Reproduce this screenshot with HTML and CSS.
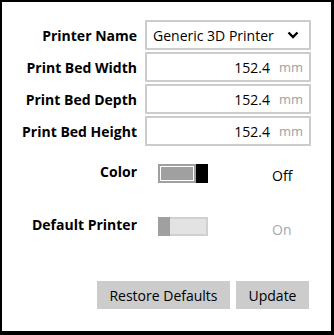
FILE: index.html
```html
<!DOCTYPE html>
<html>
<head>
<meta charset="utf-8">
<link rel="stylesheet" href="styles.css">
</head>
<body>
<div class="frame">
  <div class="fields">
    <div class="label">Printer Name</div>
    <div class="box select"><span>Generic 3D Printer</span>
      <svg class="chev" width="12" height="8" viewBox="0 0 12 8"><path d="M1.5 1.5 L6 6 L10.5 1.5" fill="none" stroke="#000" stroke-width="2.4"/></svg>
    </div>
    <div class="label">Print Bed Width</div>
    <div class="box num"><span class="val">152.4</span><span class="unit">mm</span></div>
    <div class="label">Print Bed Depth</div>
    <div class="box num"><span class="val">152.4</span><span class="unit">mm</span></div>
    <div class="label">Print Bed Height</div>
    <div class="box num"><span class="val">152.4</span><span class="unit">mm</span></div>
  </div>
  <div class="toggles">
    <div class="trow first">
      <div class="label">Color</div>
      <div class="tctl">
        <div class="toggle off"><div class="track"></div><div class="thumb"></div></div>
        <span class="state">Off</span>
      </div>
    </div>
    <div class="trow second">
      <div class="label">Default Printer</div>
      <div class="tctl">
        <div class="toggle dis"><div class="thumb"></div><div class="track"></div></div>
        <span class="state dim">On</span>
      </div>
    </div>
  </div>
  <div class="buttons">
    <button class="btn wide">Restore Defaults</button>
    <button class="btn">Update</button>
  </div>
</div>
</body>
</html>
```
FILE: styles.css
```css
html, body { margin: 0; padding: 0; background: #fff; }
body { font-family: "Open Sans", "Noto Sans", sans-serif; color: #000; }
.frame {
  width: 334px; height: 335px; box-sizing: border-box;
  border-style: solid; border-color: #000;
  border-width: 2px 3px 4px 2px;
  padding-top: 18px;
  display: flex; flex-direction: column;
}
.fields {
  display: grid;
  grid-template-columns: 135px 166px;
  column-gap: 8px;
  row-gap: 2px;
  grid-auto-rows: 30px;
}
.label {
  font-weight: 700; font-size: 14px; text-align: right;
  display: flex; align-items: center; justify-content: flex-end;
}
.box {
  box-sizing: border-box; border: 2px solid #cccccc; background: #fff;
  display: flex; align-items: center; font-size: 14px;
}
.select { padding-left: 6px; justify-content: space-between; padding-right: 10px; }
.num { justify-content: flex-end; padding-right: 6px; }
.unit { color: #a0a0a0; margin-left: 9px; font-size: 13px; }
.toggles { margin-top: 18px; display: flex; flex-direction: column; }
.trow { display: grid; grid-template-columns: 135px 166px; column-gap: 8px; height: 20px; }
.trow.second { margin-top: 33px; }
.trow .label { align-items: flex-start; line-height: 16px; }
.tctl { display: flex; align-items: flex-start; padding-left: 13px; }
.toggle { width: 50px; height: 19px; display: flex; box-sizing: border-box; }
.toggle.off .track {
  flex: 1; background: #a0a0a0; border: 2px solid #a0a0a0;
  box-shadow: inset 0 0 0 1px #fff;
}
.toggle.off .thumb { width: 12px; background: #000; }
.toggle.dis .thumb { width: 12px; background: #a0a0a0; }
.toggle.dis .track {
  flex: 1; background: #e3e3e3; border: 2px solid #d0d0d0; border-left: none;
}
.state { margin-left: 64px; font-size: 14px; line-height: 19px; padding-top: 2px; }
.state.dim { color: #a8a8a8; padding-top: 3px; }
.buttons {
  display: flex; justify-content: flex-end; gap: 6px;
  margin-top: 44px; padding-right: 22px;
}
.btn {
  font-family: inherit; font-size: 14px; color: #000;
  background: #cccccc; border: none; height: 28px; padding: 0;
}
.btn.wide { width: 133px; }
.btn:not(.wide) { width: 73px; }
```
